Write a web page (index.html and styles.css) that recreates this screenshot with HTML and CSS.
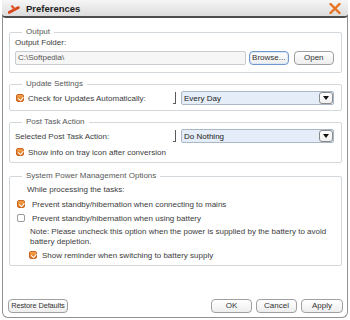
FILE: index.html
```html
<!DOCTYPE html>
<html>
<head>
<meta charset="utf-8">
<link rel="stylesheet" href="styles.css">
</head>
<body>
<div class="window">
  <div class="titlebar">
    <svg class="app-icon" width="12" height="10" viewBox="0 0 12 10">
      <path d="M1 8.5 L10.5 3.5" stroke="#d9441c" stroke-width="2.6" stroke-linecap="round"/>
      <path d="M4 2.2 L6.5 5" stroke="#e0582a" stroke-width="2.2" stroke-linecap="round"/>
    </svg>
    <span class="title">Preferences</span>
    <svg class="close" width="12" height="11" viewBox="0 0 12 11">
      <path d="M1.5 1 L10.5 10 M10.5 1 L1.5 10" stroke="#e8721f" stroke-width="2.4" stroke-linecap="round"/>
    </svg>
  </div>

  <div class="content">
    <fieldset class="group g-output">
      <legend>Output</legend>
      <div class="line">Output Folder:</div>
      <div class="row row-output">
        <div class="input">C:\Softpedia\</div>
        <button class="btn btn-browse focus">Browse...</button>
        <button class="btn btn-open">Open</button>
      </div>
    </fieldset>

    <fieldset class="group g-update">
      <legend>Update Settings</legend>
      <div class="row">
        <span class="check on cb-a"></span>
        <span class="label">Check for Updates Automatically:</span>
        <span class="bracket"></span>
        <div class="select"><span class="select-text">Every Day</span><span class="arrow"></span></div>
      </div>
    </fieldset>

    <fieldset class="group g-post">
      <legend>Post Task Action</legend>
      <div class="row">
        <span class="label">Selected Post Task Action:</span>
        <span class="bracket"></span>
        <div class="select"><span class="select-text">Do Nothing</span><span class="arrow"></span></div>
      </div>
      <div class="crow crow-a">
        <span class="check on cb-a"></span>
        <span class="label">Show info on tray icon after conversion</span>
      </div>
    </fieldset>

    <fieldset class="group g-power">
      <legend>System Power Management Options</legend>
      <div class="line while">While processing the tasks:</div>
      <div class="crow crow-b">
        <span class="check on"></span>
        <span class="label">Prevent standby/hibernation when connecting to mains</span>
      </div>
      <div class="crow crow-b">
        <span class="check"></span>
        <span class="label">Prevent standby/hibernation when using battery</span>
      </div>
      <div class="note">Note: Please uncheck this option when the power is supplied by the battery to avoid battery depletion.</div>
      <div class="crow crow-c">
        <span class="check on"></span>
        <span class="label">Show reminder when switching to battery supply</span>
      </div>
    </fieldset>
  </div>

  <div class="footer">
    <button class="btn btn-restore">Restore Defaults</button>
    <div class="footer-right">
      <button class="btn btn-foot">OK</button>
      <button class="btn btn-foot">Cancel</button>
      <button class="btn btn-apply">Apply</button>
    </div>
  </div>
</div>
</body>
</html>
```

FILE: styles.css
```css
* { box-sizing: border-box; }
html, body { margin: 0; padding: 0; background: #ffffff; }
body {
  width: 350px;
  height: 320px;
  overflow: hidden;
  font-family: "Liberation Sans", Arial, sans-serif;
  font-size: 8px;
  color: #3c3c3c;
}
.window {
  margin-left: 2px;
  width: 346px;
  height: 318px;
  border: 1px solid #929292;
  border-top: 0;
  border-radius: 0 0 6px 6px;
  display: flex;
  flex-direction: column;
  background: #fff;
}
.titlebar {
  height: 18px;
  margin: 0 -1px;
  display: flex;
  align-items: center;
  padding: 0 7px 0 6px;
  background: linear-gradient(#f6f6f6, #dcdcdc);
  border-bottom: 2px solid #4c4c4c;
  border-radius: 0 0 4px 4px;
}
.app-icon { flex: none; margin-top: 1px; }
.title {
  margin-left: 6px;
  font-weight: bold;
  font-size: 9.5px;
  color: #1e1e1e;
  flex: 1;
}
.close { flex: none; }

.content {
  padding: 9px 5px 0 6px;
  display: flex;
  flex-direction: column;
  gap: 6px;
}
.group {
  margin: 0;
  min-width: 0;
  border: 1px solid #d2d8dc;
  border-radius: 2px;
  padding: 0 7px 0 5px;
}
.group legend {
  margin-left: 7px;
  padding: 0 4px;
  line-height: 10px;
  color: #585858;
}
.g-output { padding-top: 1px; padding-bottom: 7px; }
.g-update { padding-top: 2px; padding-bottom: 5px; }
.g-post { padding-top: 2px; padding-bottom: 5px; }
.g-power { margin-top: 2px; padding-top: 4px; padding-bottom: 5px; }

.line { line-height: 10px; }
.row { display: flex; align-items: center; height: 14px; }
.row-output { margin-top: 3px; }
.input {
  flex: 0 0 231px;
  height: 14px;
  border: 1px solid #c8ccd0;
  border-radius: 2px;
  background: #f6f6f6;
  color: #555;
  padding-left: 2px;
  line-height: 12px;
}
.btn {
  height: 14px;
  padding: 0;
  border: 1px solid #a0a0a0;
  border-radius: 4px;
  background: linear-gradient(#ffffff, #ededed);
  font-family: "Liberation Sans", Arial, sans-serif;
  font-size: 8px;
  color: #333;
  line-height: 12px;
  white-space: nowrap;
}
.btn.focus { border-color: #7198cb; box-shadow: inset 0 0 0 1px #dce8f6; }
.btn-browse { width: 40px; margin-left: 3px; }
.btn-open { width: 41px; margin-left: 5px; }

.label { white-space: nowrap; }
.row .label { flex: 1; }
.bracket {
  flex: none;
  width: 3px;
  height: 12px;
  border-right: 1px solid #5a5a5a;
  border-bottom: 1px solid #5a5a5a;
  margin-right: 5px;
}
.select {
  flex: 0 0 153px;
  height: 14px;
  display: flex;
  align-items: center;
  border: 1px solid #a9b7c6;
  border-radius: 2px;
  background: #e4edf8;
  color: #222;
}
.select-text { flex: 1; padding-left: 2px; }
.arrow {
  flex: none;
  width: 14px;
  height: 12px;
  border: 1px solid #8a8a8a;
  border-radius: 3px;
  background: linear-gradient(#ffffff, #efefef);
  display: flex;
  align-items: center;
  justify-content: center;
}
.arrow::after {
  content: "";
  border-left: 3px solid transparent;
  border-right: 3px solid transparent;
  border-top: 4px solid #111;
}

.check {
  flex: none;
  width: 8px;
  height: 8px;
  border: 1px solid #9a9a9a;
  border-radius: 2px;
  background: #fff;
  position: relative;
}
.check.on {
  border-color: #c9651c;
  background: linear-gradient(#f3a24c, #e2751f);
}
.check.on::after {
  content: "";
  position: absolute;
  left: 1px;
  top: 0px;
  width: 3px;
  height: 4px;
  border-right: 1.5px solid #fff;
  border-bottom: 1.5px solid #fff;
  transform: rotate(40deg) translate(1px, 0);
}
.cb-a { margin-left: 1px; margin-right: 4px; }
.crow { display: flex; align-items: center; height: 10px; }
.crow-a { margin-top: 4px; }
.crow-a .check { margin-left: 1px; margin-right: 4px; }
.crow-b { margin-top: 4px; }
.crow-b .check { margin-left: 2px; margin-right: 7px; }
.while { padding-left: 12px; }
.note { margin-top: 4px; padding-left: 15px; line-height: 10px; padding-right: 4px; }
.crow-c { margin-top: 3px; }
.crow-c .check { margin-left: 14px; margin-right: 5px; }

.footer {
  margin-top: auto;
  padding: 0 4px 4px 5px;
  display: flex;
  justify-content: space-between;
  align-items: center;
}
.btn-restore { width: 60px; font-size: 7.4px; letter-spacing: -0.1px; }
.footer-right { display: flex; gap: 4px; }
.btn-foot { width: 41px; }
.btn-apply { width: 42px; }
```
